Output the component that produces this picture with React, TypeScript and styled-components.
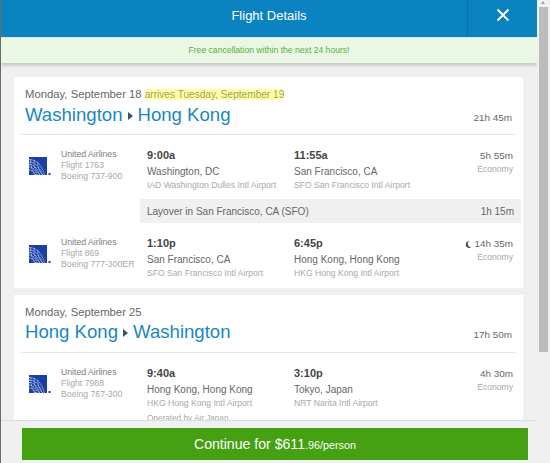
import React from "react";
import styled, { createGlobalStyle } from "styled-components";

const GlobalStyle = createGlobalStyle`
  html, body {
    margin: 0;
    padding: 0;
    background: #f0f0f0;
    font-family: "Liberation Sans", Arial, sans-serif;
  }
  * { box-sizing: border-box; }
`;

const Page = styled.div`
  width: 550px;
  height: 463px;
  display: flex;
  overflow: hidden;
  background: #f0f0f0;
  border-left: 1px solid #6b6b6b;
`;

const Main = styled.div`
  width: 536px;
  height: 463px;
  display: flex;
  flex-direction: column;
`;

const Header = styled.header`
  height: 37px;
  flex: none;
  display: flex;
  background: #0b83c0;
  color: #fff;
`;

const Title = styled.h1`
  flex: 1;
  margin: 0;
  padding-left: 70px;
  font-size: 13px;
  font-weight: 400;
  line-height: 31px;
  text-align: center;
`;

const CloseButton = styled.button`
  width: 70px;
  padding: 0 0 7px;
  border: 0;
  border-left: 1px solid #0a6fa5;
  background: transparent;
  color: #fff;
  display: flex;
  align-items: center;
  justify-content: center;
`;

const Banner = styled.div`
  height: 26px;
  flex: none;
  background: #e9f7e4;
  border-top: 1px solid #d8efd8;
  box-shadow: 0 2px 4px rgba(0, 0, 0, 0.22);
  color: #5cae3c;
  font-size: 8.6px;
  line-height: 24px;
  text-align: center;
  position: relative;
`;

const Scroller = styled.div`
  flex: 1;
  min-height: 0;
  overflow: hidden;
  padding: 14px 13px 0;
  display: flex;
  flex-direction: column;
  gap: 7px;
`;

const Card = styled.section`
  flex: none;
  width: 509px;
  padding-bottom: 1px;
  background: #fff;
`;

const TripHead = styled.div`
  height: 58px;
  margin: 0 7px;
  padding: 9px 4px 0;
  border-bottom: 1px solid #e6e6e6;
`;

const DateLine = styled.div`
  font-size: 11.3px;
  line-height: 16px;
  color: #666;
`;

const Arrives = styled.span`
  background: #ffffa8;
  color: #a5a05a;
  font-size: 10.1px;
`;

const Route = styled.div`
  display: flex;
  align-items: center;
  justify-content: space-between;
  height: 24px;
`;

const Cities = styled.div`
  display: flex;
  align-items: center;
  gap: 5px;
  color: #1a87c4;
  font-size: 18.6px;
`;

const Caret = styled.span`
  width: 0;
  height: 0;
  margin-top: 2px;
  border-left: 5px solid #33566a;
  border-top: 4.5px solid transparent;
  border-bottom: 4.5px solid transparent;
`;

const Total = styled.div`
  font-size: 9.9px;
  color: #666;
  margin-top: 5px;
`;

const Leg = styled.div`
  min-height: 64px;
  display: grid;
  grid-template-columns: 32px 86px 147px 147px 1fr;
  padding: 0 10px 0 15px;
`;

const LogoBox = styled.div`
  padding-top: 22px;
`;

const Airline = styled.div`
  padding-top: 14px;
  font-size: 8.7px;
  line-height: 11px;
  color: #a8a8a8;
  white-space: nowrap;
`;

const AirlineName = styled.div`
  color: #7c7c7c;
`;

const Stop = styled.div`
  padding-top: 12px;
  white-space: nowrap;
`;

const Time = styled.div`
  font-size: 11px;
  font-weight: 700;
  line-height: 16px;
  color: #444;
`;

const City = styled.div`
  padding-top: 1px;
  font-size: 10px;
  line-height: 16px;
  color: #666;
`;

const Airport = styled.div`
  font-size: 8.6px;
  line-height: 11px;
  color: #a8a8a8;
`;

const Meta = styled.div`
  padding-top: 14px;
  text-align: right;
  font-size: 9.9px;
  line-height: 14px;
  color: #666;
  white-space: nowrap;
`;

const Cabin = styled.div`
  font-size: 8.6px;
  line-height: 13px;
  color: #a8a8a8;
`;

const Moon = styled.svg`
  width: 7px;
  height: 7px;
  margin-right: 3px;
  vertical-align: -1px;
`;

const Layover = styled.div`
  height: 24px;
  margin: 0 2px 0 126px;
  padding: 1px 7px 0;
  display: flex;
  align-items: center;
  justify-content: space-between;
  background: #f0f0f0;
  font-size: 10px;
  color: #666;
`;

const Operated = styled.div`
  margin-top: 5px;
  font-size: 8.2px;
  color: #a8a8a8;
`;

const Footer = styled.footer`
  height: 43px;
  flex: none;
  padding: 7px 8px 0 21px;
  background: #f0f0f0;
  border-top: 1px solid #dcdcdc;
  position: relative;
`;

const ContinueButton = styled.button`
  width: 506px;
  height: 32px;
  padding: 0;
  border: 0;
  background: #45a012;
  color: #fff;
  font-family: inherit;
  font-size: 14.1px;
  display: block;
`;

const Cents = styled.span`
  font-size: 10.8px;
`;

const Track = styled.div`
  width: 13px;
  height: 463px;
  padding: 7px 2px 0 2px;
  background: #f0f0f0;
  position: relative;
`;

const Thumb = styled.div`
  height: 345px;
  background: #bcbcbc;
`;

const Arrow = styled.div`
  position: absolute;
  top: 1px;
  left: 4px;
  width: 0;
  height: 0;
  border-left: 2.5px solid transparent;
  border-right: 2.5px solid transparent;
  border-bottom: 3px solid #a0a0a0;
`;

const GlobeLogo = () => (
  <svg width="22" height="19" viewBox="0 0 22 19">
    <rect x="0" y="0" width="18" height="18" fill="#1b3fa6" />
    <g fill="none" stroke="#c3d0ef" strokeWidth="0.9" strokeDasharray="1.4 0.8">
      <path d="M0 2.5 C7 2.5 13 8 15.5 18" />
      <path d="M0 5 C6 5 11 10 13 18" />
      <path d="M0 7.5 C5 7.5 9 12 10.5 18" />
      <path d="M0 10 C4 10 7 14 8 18" />
      <path d="M0 13 C3 13 5 15 5.5 18" />
      <path d="M2 2.5 C1 8 3 14 7 18" />
      <path d="M5.5 3 C4 8 6.5 14 11 18" />
      <path d="M9 5 C8 9 10 14 14 18" />
    </g>
    <rect x="19.5" y="16" width="2" height="2" fill="#1b3fa6" />
  </svg>
);

interface LegData {
  flight: string;
  plane: string;
  depart: string;
  departCity: string;
  departAirport: string;
  arrive: string;
  arriveCity: string;
  arriveAirport: string;
  duration: string;
  night?: boolean;
  operated?: string;
}

const FlightLeg: React.FC<LegData> = (leg) => (
  <Leg>
    <LogoBox>
      <GlobeLogo />
    </LogoBox>
    <Airline>
      <AirlineName>United Airlines</AirlineName>
      <div>{leg.flight}</div>
      <div>{leg.plane}</div>
    </Airline>
    <Stop>
      <Time>{leg.depart}</Time>
      <City>{leg.departCity}</City>
      <Airport>{leg.departAirport}</Airport>
      {leg.operated && <Operated>{leg.operated}</Operated>}
    </Stop>
    <Stop>
      <Time>{leg.arrive}</Time>
      <City>{leg.arriveCity}</City>
      <Airport>{leg.arriveAirport}</Airport>
    </Stop>
    <Meta>
      {leg.night && (
        <Moon viewBox="0 0 10 10">
          <path d="M6.5 0.5 A4.7 4.7 0 1 0 9.5 8 A4 4 0 0 1 6.5 0.5 Z" fill="#444" />
        </Moon>
      )}
      {leg.duration}
      <Cabin>Economy</Cabin>
    </Meta>
  </Leg>
);

export default function App() {
  return (
    <Page>
      <GlobalStyle />
      <Main>
        <Header>
          <Title>Flight Details</Title>
          <CloseButton aria-label="Close">
            <svg width="14" height="14" viewBox="0 0 14 14">
              <path d="M1.5 1.5 L12.5 12.5 M12.5 1.5 L1.5 12.5" stroke="#fff" strokeWidth="1.8" fill="none" />
            </svg>
          </CloseButton>
        </Header>
        <Banner>Free cancellation within the next 24 hours!</Banner>
        <Scroller>
          <Card>
            <TripHead>
              <DateLine>
                Monday, September 18 <Arrives>arrives Tuesday, September 19</Arrives>
              </DateLine>
              <Route>
                <Cities>
                  Washington <Caret /> Hong Kong
                </Cities>
                <Total>21h 45m</Total>
              </Route>
            </TripHead>
            <FlightLeg
              flight="Flight 1763"
              plane="Boeing 737-900"
              depart="9:00a"
              departCity="Washington, DC"
              departAirport="IAD Washington Dulles Intl Airport"
              arrive="11:55a"
              arriveCity="San Francisco, CA"
              arriveAirport="SFO San Francisco Intl Airport"
              duration="5h 55m"
            />
            <Layover>
              <span>Layover in San Francisco, CA (SFO)</span>
              <span>1h 15m</span>
            </Layover>
            <FlightLeg
              flight="Flight 869"
              plane="Boeing 777-300ER"
              depart="1:10p"
              departCity="San Francisco, CA"
              departAirport="SFO San Francisco Intl Airport"
              arrive="6:45p"
              arriveCity="Hong Kong, Hong Kong"
              arriveAirport="HKG Hong Kong Intl Airport"
              duration="14h 35m"
              night
            />
          </Card>
          <Card>
            <TripHead>
              <DateLine>Monday, September 25</DateLine>
              <Route>
                <Cities>
                  Hong Kong <Caret /> Washington
                </Cities>
                <Total>17h 50m</Total>
              </Route>
            </TripHead>
            <FlightLeg
              flight="Flight 7988"
              plane="Boeing 767-300"
              depart="9:40a"
              departCity="Hong Kong, Hong Kong"
              departAirport="HKG Hong Kong Intl Airport"
              arrive="3:10p"
              arriveCity="Tokyo, Japan"
              arriveAirport="NRT Narita Intl Airport"
              duration="4h 30m"
              operated="Operated by Air Japan"
            />
          </Card>
        </Scroller>
        <Footer>
          <ContinueButton>
            Continue for $611<Cents>.96/person</Cents>
          </ContinueButton>
        </Footer>
      </Main>
      <Track>
        <Arrow />
        <Thumb />
      </Track>
    </Page>
  );
}
